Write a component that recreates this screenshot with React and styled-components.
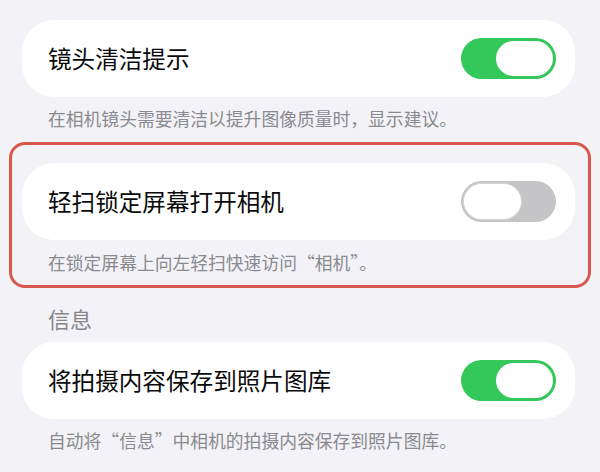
import styled, { createGlobalStyle } from "styled-components";

const GlobalStyle = createGlobalStyle`
  html, body {
    margin: 0;
    padding: 0;
    background: #f2f2f7;
  }
  body {
    font-family: "Noto Sans CJK SC", "Noto Sans", sans-serif;
    -webkit-font-smoothing: antialiased;
  }
`;

const Toggle = ({ on }) => (
  <Track $on={on}>
    <Knob $on={on} />
  </Track>
);

const App = () => {
  return (
    <>
      <GlobalStyle />
      <Page>
        <Group>
          <Card>
            <Title>镜头清洁提示</Title>
            <Toggle on />
          </Card>
          <Footnote>在相机镜头需要清洁以提升图像质量时，显示建议。</Footnote>
        </Group>

        <Highlight>
          <Card>
            <Title>轻扫锁定屏幕打开相机</Title>
            <Toggle on={false} />
          </Card>
          <Footnote $gap={11}>在锁定屏幕上向左轻扫快速访问“相机”。</Footnote>
        </Highlight>

        <Group>
          <SectionHeader>信息</SectionHeader>
          <Card>
            <Title>将拍摄内容保存到照片图库</Title>
            <Toggle on />
          </Card>
          <Footnote>自动将“信息”中相机的拍摄内容保存到照片图库。</Footnote>
        </Group>
      </Page>
    </>
  );
};

export default App;

const Page = styled.div`
  width: 600px;
  height: 472px;
  overflow: hidden;
  padding-top: 20px;
  box-sizing: border-box;
  display: flex;
  flex-direction: column;
`;

const Group = styled.section`
  display: flex;
  flex-direction: column;
  padding: 0 25px 0 22px;
  margin-bottom: 13px;
`;

const Highlight = styled(Group)`
  margin: 0 9px;
  padding: 18px 13px 12px 10px;
  border: 3px solid #d9574d;
  border-radius: 16px;
`;

const Card = styled.div`
  height: 77px;
  display: flex;
  align-items: center;
  justify-content: space-between;
  padding: 0 19px 0 26px;
  background: #ffffff;
  border-radius: 32px;
`;

const Title = styled.span`
  font-size: 23.6px;
  color: #0a0a0a;
  line-height: 1;
`;

const Footnote = styled.p`
  margin: ${(p) => p.$gap ?? 10}px 0 0;
  padding-left: 26px;
  font-size: 17.8px;
  line-height: 22px;
  color: #8a8a8e;
`;

const SectionHeader = styled.h3`
  margin: 16px 0 10px;
  padding-left: 26px;
  font-size: 22px;
  font-weight: 400;
  line-height: 28px;
  color: #86868a;
`;

const Track = styled.div`
  width: 95px;
  height: 41px;
  border-radius: 21px;
  padding: 3px;
  box-sizing: border-box;
  display: flex;
  justify-content: ${(p) => (p.$on ? "flex-end" : "flex-start")};
  background: ${(p) => (p.$on ? "#34c759" : "#c5c5c7")};
`;

const Knob = styled.div`
  width: 57px;
  height: 35px;
  border-radius: 18px;
  background: #ffffff;
  box-shadow: ${(p) => (p.$on ? "none" : "0 0 0 1px #d6d6d8")};
`;
